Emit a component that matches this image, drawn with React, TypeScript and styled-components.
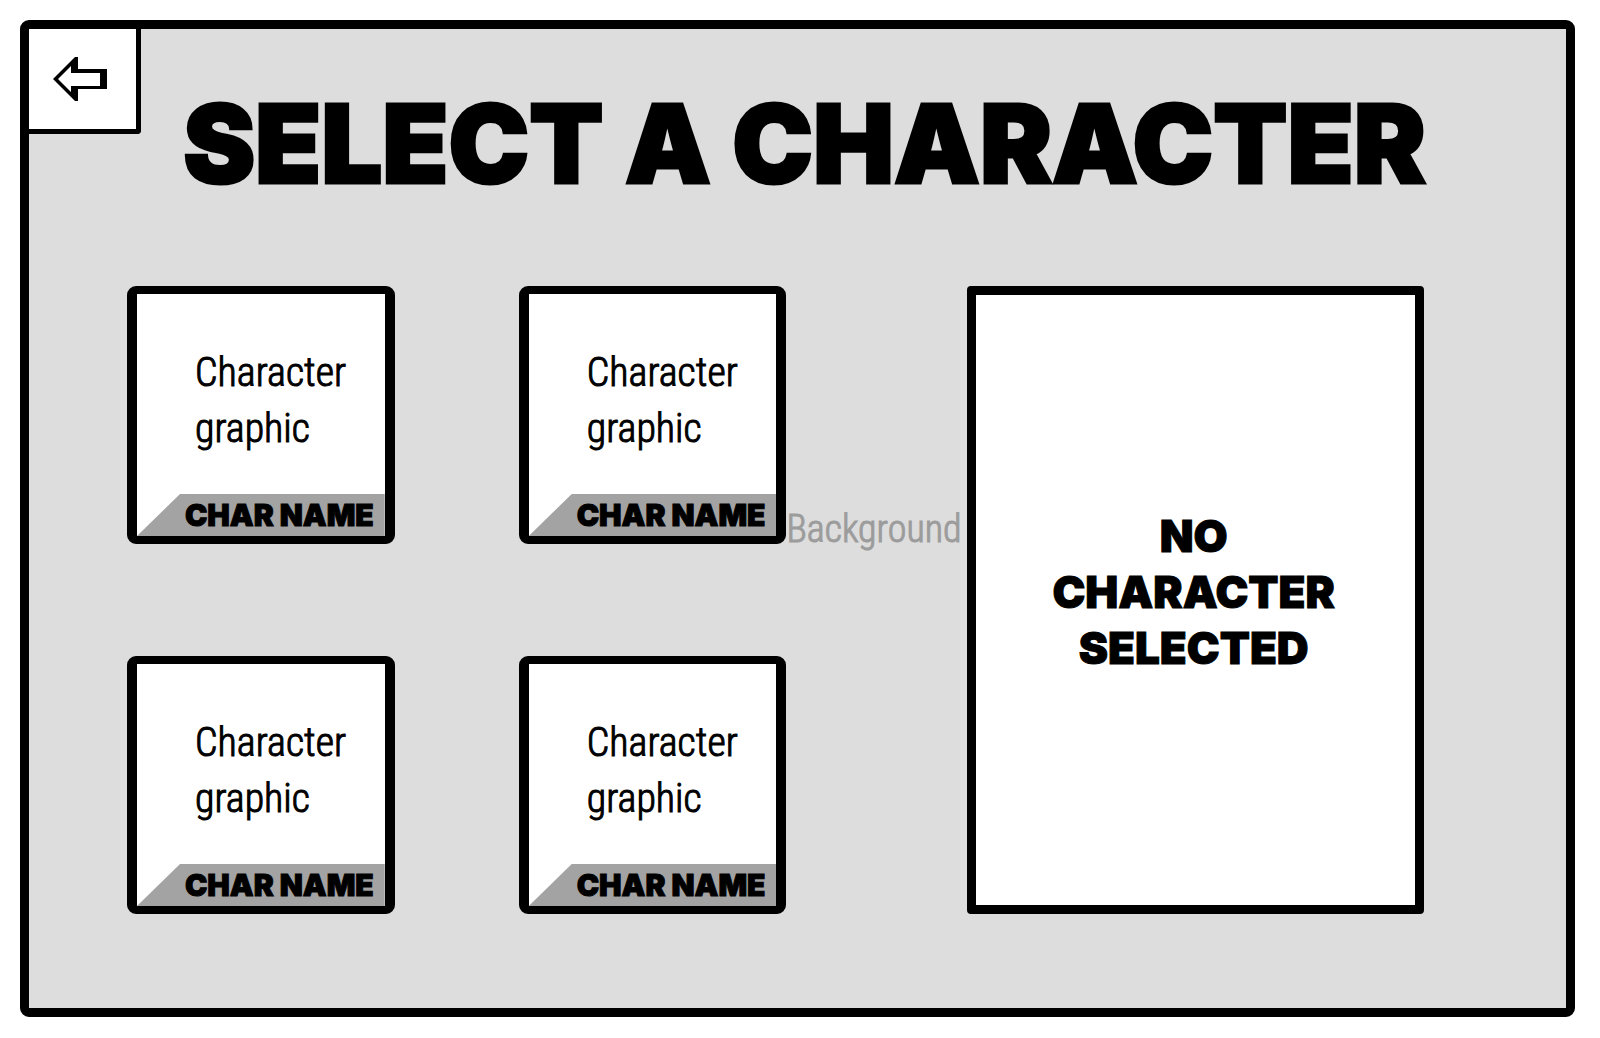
import React from "react";
import styled, { createGlobalStyle } from "styled-components";

const GlobalStyle = createGlobalStyle`
  *, *::before, *::after { box-sizing: border-box; }
  body { margin: 0; background: #fff; color: #000; }
`;

const display = `"Inter", "Liberation Sans", sans-serif`;
const narrow = `"Roboto Condensed", "Roboto", sans-serif`;

const Screen = styled.div`
  min-height: 100vh;
  display: flex;
  padding: 20px 25px 21px 20px;
`;

const Frame = styled.main`
  flex: 1;
  display: flex;
  flex-direction: column;
  border: 9px solid #000;
  border-radius: 9px;
  background: #ddd;
`;

const Header = styled.header`
  display: grid;
  grid-template-columns: 112px 1fr 98px;
  align-items: start;
`;

const BackButton = styled.button`
  height: 105px;
  display: flex;
  align-items: center;
  justify-content: center;
  padding: 0 6px 0 0;
  border: 0 solid #000;
  border-width: 0 5px 5px 0;
  border-radius: 0 0 4px 0;
  background: #fff;
  cursor: pointer;
`;

const Title = styled.h1`
  margin: 0;
  padding-top: 50px;
  font: 900 108px/130px ${display};
  -webkit-text-stroke: 3px #000;
  text-align: center;
  white-space: nowrap;
`;

const Content = styled.div`
  flex: 1;
  display: grid;
  grid-template-columns: 660fr 181fr 457fr;
  padding: 77px 142px 94px 98px;
`;

const Roster = styled.ul`
  display: grid;
  grid-template-columns: 268fr 268fr;
  grid-template-rows: 1fr 1fr;
  gap: 112px 124px;
  margin: 0;
  padding: 0;
  list-style: none;
`;

const Slot = styled.li`
  display: flex;
`;

const Card = styled.button`
  flex: 1;
  display: flex;
  flex-direction: column;
  padding: 0;
  border: solid #000;
  border-width: 8px 10px;
  border-radius: 9px;
  background: #fff;
  color: #000;
  cursor: pointer;
`;

const Graphic = styled.span`
  flex: 1;
  display: flex;
  align-items: center;
  padding: 14px 24px 0 58px;
  font: 300 40px/56px ${narrow};
  -webkit-text-stroke: 1px #000;
  text-align: left;
`;

const NameBar = styled.span`
  height: 42px;
  display: flex;
  align-items: center;
  justify-content: flex-end;
  padding-right: 11px;
  background: #a3a3a3;
  clip-path: polygon(43px 0, 100% 0, 100% 100%, 0 100%);
  font: 900 30px/42px ${display};
  -webkit-text-stroke: 1px #000;
  white-space: nowrap;
`;

const BackgroundLabel = styled.p`
  margin: 0;
  padding-top: 215px;
  font: 300 38px/56px ${narrow};
  -webkit-text-stroke: 1px #9c9c9c;
  color: #9c9c9c;
`;

const Preview = styled.section`
  display: flex;
  align-items: center;
  justify-content: center;
  padding: 0 4px 16px 0;
  border: 9px solid #000;
  border-radius: 4px;
  background: #fff;
`;

const PreviewMessage = styled.p`
  width: min-content;
  margin: 0;
  font: 900 44px/56px ${display};
  -webkit-text-stroke: 1px #000;
  text-align: center;
`;

const ArrowIcon = () => (
  <svg width="54" height="44" viewBox="0 0 54 44" aria-hidden="true">
    <path fill="#000" d="M0 22 22 0h3v12h29v20H25v12h-3z" />
    <path fill="#fff" d="M5 22 18 9v7h29v13H18v6z" />
  </svg>
);

const characters = [1, 2, 3, 4].map((id) => ({ id, name: "CHAR NAME" }));

export default function App() {
  return (
    <>
      <GlobalStyle />
      <Screen>
        <Frame>
          <Header>
            <BackButton type="button" aria-label="Back">
              <ArrowIcon />
            </BackButton>
            <Title>SELECT A CHARACTER</Title>
          </Header>
          <Content>
            <Roster>
              {characters.map(({ id, name }) => (
                <Slot key={id}>
                  <Card type="button">
                    <Graphic>
                      Character
                      <br />
                      graphic
                    </Graphic>
                    <NameBar>{name}</NameBar>
                  </Card>
                </Slot>
              ))}
            </Roster>
            <BackgroundLabel>Background</BackgroundLabel>
            <Preview>
              <PreviewMessage>NO CHARACTER SELECTED</PreviewMessage>
            </Preview>
          </Content>
        </Frame>
      </Screen>
    </>
  );
}
